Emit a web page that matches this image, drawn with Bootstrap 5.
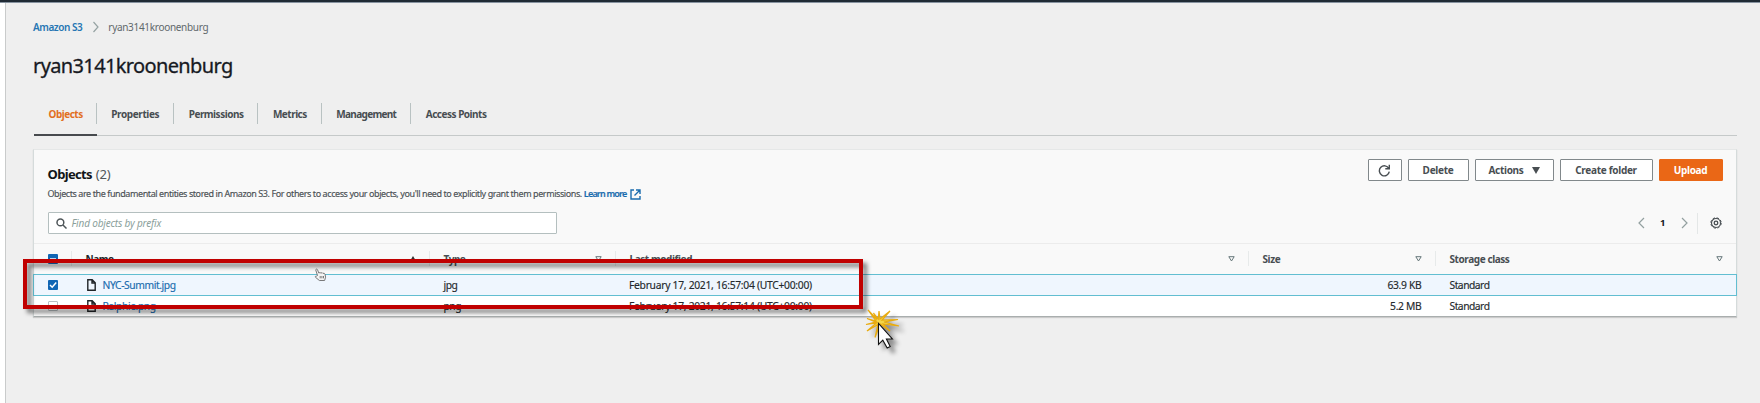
<!DOCTYPE html>
<html lang="en">
<head>
<meta charset="utf-8">
<title>ryan3141kroonenburg - Amazon S3</title>
<link href="https://cdn.jsdelivr.net/npm/bootstrap@5.3.0/dist/css/bootstrap.min.css" rel="stylesheet">
<style>
body{font:10.3px/14px "Noto Sans","Open Sans",sans-serif;color:#24292d;background:#efefef;height:403px;overflow:hidden}
svg{display:block;flex:none}
.topbar{height:3px;background:#202b35;border-bottom:1px solid #8793a0}
.page{height:400px;margin-left:5px;border-left:1px solid #c9cbcb;padding:17px 23px 0 27px;background:#efefef}
.shell{background:#fff;position:relative}
a{color:#1a6cae;text-decoration:none}
.crumbs{font-size:10px;letter-spacing:-.31px;color:#5f686b}
.crumbs a{font-weight:600;color:#2676b3;letter-spacing:-.45px}
.crumbs svg{margin:0 8px 0 10px}
h1{font-size:20px;line-height:28px;letter-spacing:-.63px;font-weight:400;color:#16191f;-webkit-text-stroke:.3px #16191f;margin:18px 0 0}
.tabs{margin:22px 0 0 1px;height:34px;border-bottom:1px solid #c5c9c9;width:1703px;font-size:10px;font-weight:700;letter-spacing:-.5px;color:#474d51}
.tabs>div{height:34px;padding:5px 15px 0 14.5px;position:relative}
.tabs>div:not(:last-child)::after{content:"";position:absolute;right:0;top:1px;width:1px;height:21px;background:#b9c2c2}
.tabs>.on{color:#e2701f;border-bottom:2px solid #474a4e;padding-right:14px}
.t-mgmt{letter-spacing:-.68px}
.t-prop{letter-spacing:-.38px}
.panel{width:1704px;margin-top:13px;height:168px;background:#fff;border:1px solid #d5dbdb;border-top-color:#e5e7e7;border-bottom-color:#a9aeae;box-shadow:0 1px 1px rgba(0,0,0,.15)}
.panel-top{height:94px;background:#f9f9f9;padding:9px 13.500px 0 13.500px;border-bottom:1px solid #ececec}
h2{font-size:13px;line-height:18px;letter-spacing:-.65px;font-weight:700;color:#111518;margin:6px 0 0}
h2 span{font-weight:400;color:#50575b;letter-spacing:-.15px;margin-left:1px}
.descr{font-size:9px;letter-spacing:-.415px;line-height:14px;margin-top:4px;color:#4a5054;white-space:nowrap;-webkit-text-stroke:.15px}
.descr a{font-weight:600;letter-spacing:-.8px;margin-left:2px;margin-right:4px}
.search{width:509px;height:22px;border:1px solid #b4bfbf;background:#fff;margin-top:11px;padding-left:7px;border-radius:1px;font-size:10px;font-style:italic;color:#8b9f9b;letter-spacing:-.17px}
.search span{margin-left:5px}
.actionbar{gap:6px}
.b{height:22px;border:1px solid #81888b;border-radius:1px;background:#fff;color:#484e52;font-weight:700;font-size:10px;letter-spacing:-.3px}
.b-refresh{width:34px}.b-del{width:61px}.b-act{width:79px}.b-new{width:93px}
.b-up{width:64px;background:#ea6716;border-color:#ea6716;color:#fff}
.pager{height:22px;margin-top:31px;font-weight:700;font-size:9.5px;color:#16191f}
.pager span{margin:0 15px}
.pager .gear{margin-right:1px}
.vsep{width:1px;height:21px;background:#e4e7e7;margin:0 12px 0 9px}
.grid6{display:grid;grid-template-columns:37.500px 358px 186px 633px 187px 1fr;align-items:center}
.heads{height:30px;background:#f9f9f9;font-weight:700;font-size:10px;letter-spacing:-.42px;color:#484e52}
.heads>div{height:15px;margin-top:-1px;border-right:1px solid #e7eaea;padding:0 13px 0 14px}
.heads>div:last-child{border:0}
.heads>div:first-child,.rowx>div:first-child{padding-left:13.500px;padding-right:0}
.rowx>div{padding:0 14px;letter-spacing:-.5px;-webkit-text-stroke:.15px}
.rowx>div:nth-child(2){letter-spacing:-.42px}
.rowx>.text-end{padding-right:14px;letter-spacing:-.3px}
.rowx .dt{padding-left:13.500px;letter-spacing:-.28px}
.file{margin:0 7px 0 1px}
.rowx{height:20px}
.sel{height:22px;background:#eff6fe;outline:1px solid #62bed1;outline-offset:-1px;margin:0 -1px;padding:0 1px}
.cb{width:10px;height:10px;border-radius:1px;background:#1166b4;flex:none}
.cb.off{background:#fff;border:1px solid #b8bfc2}
.frame{position:absolute;left:23px;top:259px;width:840px;height:50px;border:4px solid #c00000;filter:drop-shadow(4px 4px 2px rgba(0,0,0,.5))}
.over{position:absolute}
.hand{left:314px;top:268px}
.burst{left:860px;top:304px;filter:drop-shadow(5px 5px 2px rgba(0,0,0,.4))}
</style>
<script src="https://cdn.jsdelivr.net/npm/bootstrap@5.3.0/dist/js/bootstrap.bundle.min.js"></script>
</head>
<body>
<div class="shell">
<div class="topbar"></div>
<main class="page">
  <nav class="crumbs d-flex align-items-center"><a href="#">Amazon S3</a>
    <svg width="8" height="12" viewBox="0 0 8 12" fill="none" stroke="#96a3a3" stroke-width="1.2"><path d="M1.5 1 6 6l-4.500 5"/></svg>
    <span>ryan3141kroonenburg</span></nav>
  <h1>ryan3141kroonenburg</h1>
  <div class="tabs d-flex"><div class="on">Objects</div><div class="t-prop">Properties</div><div>Permissions</div><div>Metrics</div><div class="t-mgmt">Management</div><div>Access Points</div></div>
  <section class="panel">
    <div class="panel-top d-flex justify-content-between">
      <div>
        <h2>Objects <span>(2)</span></h2>
        <div class="descr d-flex align-items-center">Objects are the fundamental entities stored in Amazon S3. For others to access your objects, you'll need to explicitly grant them permissions. <a href="#">Learn more</a>
          <svg width="11" height="11" viewBox="0 0 11 11" fill="none" stroke="#1a6cae" stroke-width="1.4"><path d="M4 1H1v9h9V7M6 1h4v4M10 1 4.500 6.500"/></svg></div>
        <div class="search d-flex align-items-center"><svg width="11" height="11" viewBox="0 0 11 11" fill="none" stroke="#4f5659" stroke-width="1.5"><circle cx="4.400" cy="4.400" r="3.400"/><path d="m7 7 3.500 3.500"/></svg><span>Find objects by prefix</span></div>
      </div>
      <div>
        <div class="actionbar d-flex justify-content-end">
          <div class="b b-refresh d-flex align-items-center justify-content-center"><svg width="13" height="13" viewBox="0 0 13 13" fill="none" stroke="#484e52" stroke-width="1.4"><path d="M10.800 4.500A5 5 0 1 0 11.300 7.700M11.300 .8v4H7.300"/></svg></div>
          <div class="b b-del d-flex align-items-center justify-content-center">Delete</div>
          <div class="b b-act d-flex align-items-center justify-content-center">Actions<svg class="ms-2" width="8" height="7" viewBox="0 0 8 7"><path fill="#484e52" d="M0 0h8L4 7z"/></svg></div>
          <div class="b b-new d-flex align-items-center justify-content-center">Create folder</div>
          <div class="b b-up d-flex align-items-center justify-content-center">Upload</div>
        </div>
        <div class="pager d-flex align-items-center justify-content-end">
          <svg width="7" height="12" viewBox="0 0 7 12" fill="none" stroke="#93a0a0" stroke-width="1.200"><path d="M6 1 1 6l5 5"/></svg>
          <span>1</span>
          <svg width="7" height="12" viewBox="0 0 7 12" fill="none" stroke="#93a0a0" stroke-width="1.200"><path d="m1 1 5 5-5 5"/></svg>
          <div class="vsep"></div>
          <svg class="gear" width="12" height="12" viewBox="0 0 12 12" fill="none" stroke="#484e52"><circle cx="6" cy="6" r="5.200" stroke-width="1" stroke-dasharray="2.400 1.684"/><circle cx="6" cy="6" r="4.500" stroke-width="1.100"/><circle cx="6" cy="6" r="1.800" stroke-width="1.300"/></svg>
        </div>
      </div>
    </div>
    <div class="heads grid6">
      <div class="d-flex align-items-center"><span class="cb"><svg width="10" height="10"><path d="M2 5h6" stroke="#fff" stroke-width="1.500"/></svg></span></div>
      <div class="d-flex align-items-center justify-content-between"><span class="text-dark">Name</span><svg width="6" height="5"><path d="M0 5 3 0l3 5z" fill="#333"/></svg></div>
      <div class="d-flex align-items-center justify-content-between">Type<svg width="7" height="6" fill="none" stroke="#66777a"><path d="M.8 .7h5.400L3.500 5z"/></svg></div>
      <div class="d-flex align-items-center justify-content-between">Last modified<svg width="7" height="6" fill="none" stroke="#66777a"><path d="M.8 .7h5.400L3.500 5z"/></svg></div>
      <div class="d-flex align-items-center justify-content-between">Size<svg width="7" height="6" fill="none" stroke="#66777a"><path d="M.8 .7h5.400L3.500 5z"/></svg></div>
      <div class="d-flex align-items-center justify-content-between">Storage class<svg width="7" height="6" fill="none" stroke="#66777a"><path d="M.8 .7h5.400L3.500 5z"/></svg></div>
    </div>
    <div class="rowx sel grid6">
      <div><span class="cb d-block"><svg width="10" height="10" fill="none" stroke="#fff" stroke-width="1.500"><path d="m2 5 2.200 2.200L8.200 2.500"/></svg></span></div>
      <div class="d-flex align-items-center"><svg class="file" width="9" height="12" viewBox="0 0 9 12" fill="none" stroke="#202427" stroke-width="1.400"><path d="M.8.8h4.400l3 3v7.400H.8zM5 .8V4h3.200"/></svg><a href="#">NYC-Summit.jpg</a></div>
      <div>jpg</div><div class="dt">February 17, 2021, 16:57:04 (UTC+00:00)</div><div class="text-end">63.9 KB</div><div>Standard</div>
    </div>
    <div class="rowx grid6">
      <div><span class="cb off d-block"></span></div>
      <div class="d-flex align-items-center"><svg class="file" width="9" height="12" viewBox="0 0 9 12" fill="none" stroke="#202427" stroke-width="1.400"><path d="M.8.8h4.400l3 3v7.400H.8zM5 .8V4h3.200"/></svg><a href="#">Ralphie.png</a></div>
      <div>png</div><div class="dt">February 17, 2021, 16:57:14 (UTC+00:00)</div><div class="text-end">5.2 MB</div><div>Standard</div>
    </div>
  </section>
</main>
<div class="frame"></div>
<!-- hand pointer -->
<svg class="over hand" width="13" height="14" viewBox="0 0 13 14" fill="#f4f4f4" stroke="#6b6b6b" stroke-width=".9" stroke-linejoin="round"><path d="M3.500 7.500 1.800 2.200c-.3-1.200 1.300-1.600 1.700-.5L4.800 5l1.300-.5.8.6 1.300-.4.700.7 1.200-.2.900 1 .600 3-1 3.300H5.400L1.500 9.300c-.5-.9.400-1.700 1.100-1.200z"/><path d="M6.200 8v2.300M7.900 8v2.300M9.500 8v2.300"/></svg>
<!-- click burst and arrow pointer -->
<svg class="over burst" width="50" height="55" viewBox="0 0 50 55"><path d="M8 6 17 15.500 13.500 9 18.300 15 19 7 20 15 30 7 22 16 38 15.500 24 18 39 22 23 20 30 27 20 20 15 33.500 18 20.500 7 27 16.500 19 6 20.500 15.500 18 7 14.500 16 17z" fill="#f3d64a" stroke="#e8ab10" stroke-width="1.200"/><path d="m18.500 19.500 v21l4.300-4.300 4.400 7.800 3-1.500-3.800-7.500h6z" fill="#fff" stroke="#111" stroke-width="1.100"/></svg>
</div>
</body>
</html>
